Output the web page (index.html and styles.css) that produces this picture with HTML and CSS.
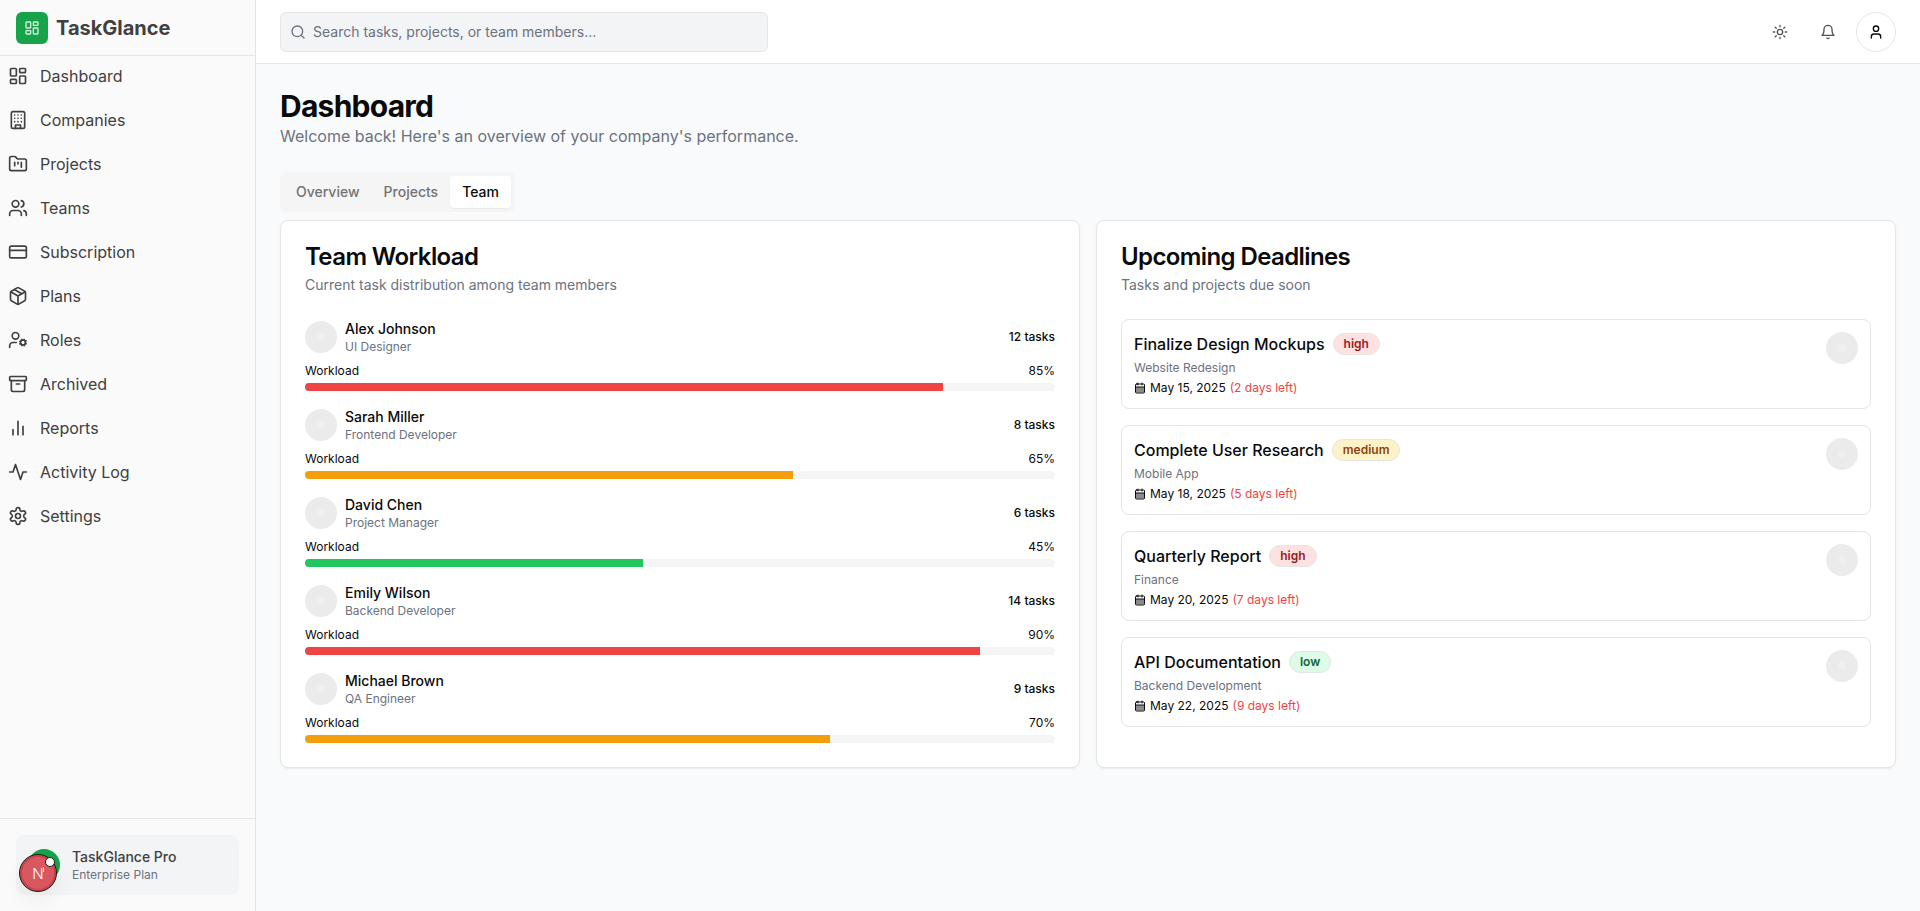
FILE: index.html
```html
<!DOCTYPE html>
<html lang="en">

<head>
    <meta charset="UTF-8">
    <meta name="viewport" content="width=device-width, initial-scale=1.0">
    <title>TaskGlance</title>
    <link rel="stylesheet" href="styles.css">
</head>

<body>
    <aside class="sidebar">
        <div class="brand">
            <div class="brand-logo">
                <svg class="icon" viewBox="0 0 24 24"><rect x="3" y="3" width="7" height="9" rx="1"/><rect x="14" y="3" width="7" height="5" rx="1"/><rect x="14" y="12" width="7" height="9" rx="1"/><rect x="3" y="16" width="7" height="5" rx="1"/></svg>
            </div>
            <span class="brand-name">TaskGlance</span>
        </div>
        <nav class="nav">
            <a class="nav-item"><svg class="icon" viewBox="0 0 24 24"><rect x="3" y="3" width="7" height="9" rx="1"/><rect x="14" y="3" width="7" height="5" rx="1"/><rect x="14" y="12" width="7" height="9" rx="1"/><rect x="3" y="16" width="7" height="5" rx="1"/></svg>Dashboard</a>
            <a class="nav-item"><svg class="icon" viewBox="0 0 24 24"><rect x="4" y="2" width="16" height="20" rx="2"/><path d="M9 22v-4h6v4M8 6h.01M16 6h.01M12 6h.01M12 10h.01M12 14h.01M16 10h.01M16 14h.01M8 10h.01M8 14h.01"/></svg>Companies</a>
            <a class="nav-item"><svg class="icon" viewBox="0 0 24 24"><path d="M4 20h16a2 2 0 0 0 2-2V8a2 2 0 0 0-2-2h-7.93a2 2 0 0 1-1.66-.9l-.82-1.2A2 2 0 0 0 7.93 3H4a2 2 0 0 0-2 2v13c0 1.1.9 2 2 2Z"/><path d="M8 10v4M12 10v2M16 10v6"/></svg>Projects</a>
            <a class="nav-item"><svg class="icon" viewBox="0 0 24 24"><path d="M16 21v-2a4 4 0 0 0-4-4H6a4 4 0 0 0-4 4v2"/><circle cx="9" cy="7" r="4"/><path d="M22 21v-2a4 4 0 0 0-3-3.87M16 3.13a4 4 0 0 1 0 7.75"/></svg>Teams</a>
            <a class="nav-item"><svg class="icon" viewBox="0 0 24 24"><rect x="2" y="5" width="20" height="14" rx="2"/><path d="M2 10h20"/></svg>Subscription</a>
            <a class="nav-item"><svg class="icon" viewBox="0 0 24 24"><path d="M16.5 9.4 7.55 4.24"/><path d="M21 16V8a2 2 0 0 0-1-1.73l-7-4a2 2 0 0 0-2 0l-7 4A2 2 0 0 0 3 8v8a2 2 0 0 0 1 1.73l7 4a2 2 0 0 0 2 0l7-4A2 2 0 0 0 21 16z"/><path d="M3.29 7 12 12l8.71-5M12 22V12"/></svg>Plans</a>
            <a class="nav-item"><svg class="icon" viewBox="0 0 24 24"><circle cx="18" cy="15" r="3"/><circle cx="9" cy="7" r="4"/><path d="M10 15H6a4 4 0 0 0-4 4v2"/><path d="m21.7 16.4-.9-.3m-5.6-2.2-.9-.3m2.3 5.1.3-.9m2.2-5.6.3-.9m.2 7.4-.4-1m-2.4-5.4-.4-1m-2.1 5.3 1-.4m5.4-2.8 1-.4"/></svg>Roles</a>
            <a class="nav-item"><svg class="icon" viewBox="0 0 24 24"><rect x="2" y="3" width="20" height="5" rx="1"/><path d="M4 8v11a2 2 0 0 0 2 2h12a2 2 0 0 0 2-2V8M10 12h4"/></svg>Archived</a>
            <a class="nav-item"><svg class="icon" viewBox="0 0 24 24"><path d="M18 20V10M12 20V4M6 20v-6"/></svg>Reports</a>
            <a class="nav-item"><svg class="icon" viewBox="0 0 24 24"><path d="M22 12h-4l-3 9L9 3l-3 9H2"/></svg>Activity Log</a>
            <a class="nav-item"><svg class="icon" viewBox="0 0 24 24"><path d="M12.22 2h-.44a2 2 0 0 0-2 2v.18a2 2 0 0 1-1 1.73l-.43.25a2 2 0 0 1-2 0l-.15-.08a2 2 0 0 0-2.73.73l-.22.38a2 2 0 0 0 .73 2.73l.15.1a2 2 0 0 1 1 1.72v.51a2 2 0 0 1-1 1.74l-.15.09a2 2 0 0 0-.73 2.73l.22.38a2 2 0 0 0 2.73.73l.15-.08a2 2 0 0 1 2 0l.43.25a2 2 0 0 1 1 1.73V20a2 2 0 0 0 2 2h.44a2 2 0 0 0 2-2v-.18a2 2 0 0 1 1-1.73l.43-.25a2 2 0 0 1 2 0l.15.08a2 2 0 0 0 2.73-.73l.22-.39a2 2 0 0 0-.73-2.73l-.15-.08a2 2 0 0 1-1-1.74v-.5a2 2 0 0 1 1-1.74l.15-.09a2 2 0 0 0 .73-2.73l-.22-.38a2 2 0 0 0-2.73-.73l-.15.08a2 2 0 0 1-2 0l-.43-.25a2 2 0 0 1-1-1.73V4a2 2 0 0 0-2-2z"/><circle cx="12" cy="12" r="3"/></svg>Settings</a>
        </nav>
        <div class="sidebar-footer">
            <div class="plan-card">
                <div class="plan-icon"></div>
                <div>
                    <div class="plan-name">TaskGlance Pro</div>
                    <div class="plan-type">Enterprise Plan</div>
                </div>
            </div>
        </div>
    </aside>

    <div class="page">
        <header class="topbar">
            <div class="search">
                <svg class="icon" viewBox="0 0 24 24"><circle cx="11" cy="11" r="8"/><path d="m21 21-4.3-4.3"/></svg>
                <input type="text" placeholder="Search tasks, projects, or team members...">
            </div>
            <div class="topbar-actions">
                <button class="icon-btn"><svg class="icon" viewBox="0 0 24 24"><circle cx="12" cy="12" r="4"/><path d="M12 2v2M12 20v2M4.93 4.93l1.41 1.41M17.66 17.66l1.41 1.41M2 12h2M20 12h2M6.34 17.66l-1.41 1.41M19.07 4.93l-1.41 1.41"/></svg></button>
                <button class="icon-btn"><svg class="icon" viewBox="0 0 24 24"><path d="M6 8a6 6 0 0 1 12 0c0 7 3 9 3 9H3s3-2 3-9"/><path d="M10.3 21a1.94 1.94 0 0 0 3.4 0"/></svg></button>
                <button class="icon-btn user-btn"><svg class="icon" viewBox="0 0 24 24"><path d="M19 21v-2a4 4 0 0 0-4-4H9a4 4 0 0 0-4 4v2"/><circle cx="12" cy="7" r="4"/></svg></button>
            </div>
        </header>

        <main class="content">
            <h1>Dashboard</h1>
            <p class="subtitle">Welcome back! Here's an overview of your company's performance.</p>

            <div class="tabs">
                <span class="tab">Overview</span>
                <span class="tab">Projects</span>
                <span class="tab active">Team</span>
            </div>

            <div class="columns">
                <section class="card">
                    <h3>Team Workload</h3>
                    <p class="card-desc">Current task distribution among team members</p>
                    <div class="members">
                        <div class="member">
                            <div class="member-top">
                                <div class="person">
                                    <div class="avatar"></div>
                                    <div>
                                        <div class="person-name">Alex Johnson</div>
                                        <div class="person-role">UI Designer</div>
                                    </div>
                                </div>
                                <span class="task-count">12 tasks</span>
                            </div>
                            <div class="load-label"><span>Workload</span><span>85%</span></div>
                            <div class="bar"><div class="bar-fill red" style="width: 85%"></div></div>
                        </div>
                        <div class="member">
                            <div class="member-top">
                                <div class="person">
                                    <div class="avatar"></div>
                                    <div>
                                        <div class="person-name">Sarah Miller</div>
                                        <div class="person-role">Frontend Developer</div>
                                    </div>
                                </div>
                                <span class="task-count">8 tasks</span>
                            </div>
                            <div class="load-label"><span>Workload</span><span>65%</span></div>
                            <div class="bar"><div class="bar-fill amber" style="width: 65%"></div></div>
                        </div>
                        <div class="member">
                            <div class="member-top">
                                <div class="person">
                                    <div class="avatar"></div>
                                    <div>
                                        <div class="person-name">David Chen</div>
                                        <div class="person-role">Project Manager</div>
                                    </div>
                                </div>
                                <span class="task-count">6 tasks</span>
                            </div>
                            <div class="load-label"><span>Workload</span><span>45%</span></div>
                            <div class="bar"><div class="bar-fill green" style="width: 45%"></div></div>
                        </div>
                        <div class="member">
                            <div class="member-top">
                                <div class="person">
                                    <div class="avatar"></div>
                                    <div>
                                        <div class="person-name">Emily Wilson</div>
                                        <div class="person-role">Backend Developer</div>
                                    </div>
                                </div>
                                <span class="task-count">14 tasks</span>
                            </div>
                            <div class="load-label"><span>Workload</span><span>90%</span></div>
                            <div class="bar"><div class="bar-fill red" style="width: 90%"></div></div>
                        </div>
                        <div class="member">
                            <div class="member-top">
                                <div class="person">
                                    <div class="avatar"></div>
                                    <div>
                                        <div class="person-name">Michael Brown</div>
                                        <div class="person-role">QA Engineer</div>
                                    </div>
                                </div>
                                <span class="task-count">9 tasks</span>
                            </div>
                            <div class="load-label"><span>Workload</span><span>70%</span></div>
                            <div class="bar"><div class="bar-fill amber" style="width: 70%"></div></div>
                        </div>
                    </div>
                </section>

                <section class="card">
                    <h3>Upcoming Deadlines</h3>
                    <p class="card-desc">Tasks and projects due soon</p>
                    <div class="deadlines">
                        <div class="deadline">
                            <div>
                                <div class="deadline-title">Finalize Design Mockups <span class="badge high">high</span></div>
                                <div class="deadline-project">Website Redesign</div>
                                <div class="deadline-date">
                                    <svg class="icon" viewBox="0 0 24 24"><rect class="cal-days" x="4" y="10" width="16" height="11"/><rect x="3" y="4" width="18" height="18" rx="2"/><path d="M16 2v4M8 2v4M3 10h18"/></svg>
                                    May 15, 2025 <span class="days-left">(2 days left)</span>
                                </div>
                            </div>
                            <div class="avatar"></div>
                        </div>
                        <div class="deadline">
                            <div>
                                <div class="deadline-title">Complete User Research <span class="badge medium">medium</span></div>
                                <div class="deadline-project">Mobile App</div>
                                <div class="deadline-date">
                                    <svg class="icon" viewBox="0 0 24 24"><rect class="cal-days" x="4" y="10" width="16" height="11"/><rect x="3" y="4" width="18" height="18" rx="2"/><path d="M16 2v4M8 2v4M3 10h18"/></svg>
                                    May 18, 2025 <span class="days-left">(5 days left)</span>
                                </div>
                            </div>
                            <div class="avatar"></div>
                        </div>
                        <div class="deadline">
                            <div>
                                <div class="deadline-title">Quarterly Report <span class="badge high">high</span></div>
                                <div class="deadline-project">Finance</div>
                                <div class="deadline-date">
                                    <svg class="icon" viewBox="0 0 24 24"><rect class="cal-days" x="4" y="10" width="16" height="11"/><rect x="3" y="4" width="18" height="18" rx="2"/><path d="M16 2v4M8 2v4M3 10h18"/></svg>
                                    May 20, 2025 <span class="days-left">(7 days left)</span>
                                </div>
                            </div>
                            <div class="avatar"></div>
                        </div>
                        <div class="deadline">
                            <div>
                                <div class="deadline-title">API Documentation <span class="badge low">low</span></div>
                                <div class="deadline-project">Backend Development</div>
                                <div class="deadline-date">
                                    <svg class="icon" viewBox="0 0 24 24"><rect class="cal-days" x="4" y="10" width="16" height="11"/><rect x="3" y="4" width="18" height="18" rx="2"/><path d="M16 2v4M8 2v4M3 10h18"/></svg>
                                    May 22, 2025 <span class="days-left">(9 days left)</span>
                                </div>
                            </div>
                            <div class="avatar"></div>
                        </div>
                    </div>
                </section>
            </div>
        </main>
    </div>

    <!-- dev tools badge sits over the sidebar footer -->
    <div class="dev-badge">
        <span class="dev-letter">N</span>
        <span class="dev-tick"></span>
        <span class="dev-dot"></span>
    </div>
</body>

</html>
```

FILE: styles.css
```css
* {
    box-sizing: border-box;
}

body {
    margin: 0;
    height: 911px;
    display: flex;
    overflow: hidden;
    font-family: Inter, "Liberation Sans", sans-serif;
    color: #0a0a0a;
    background-color: #f9fafb;
}

.icon {
    width: 16px;
    height: 16px;
    flex-shrink: 0;
    fill: none;
    stroke: currentColor;
    stroke-width: 2;
    stroke-linecap: round;
    stroke-linejoin: round;
}

/* sidebar */
.sidebar {
    width: 256px;
    flex-shrink: 0;
    display: flex;
    flex-direction: column;
    background-color: #fafafa;
    border-right: 1px solid #e5e5e5;
}

.brand {
    height: 56px;
    display: flex;
    align-items: center;
    gap: 8px;
    padding-left: 16px;
    border-bottom: 1px solid #e5e5e5;
}

.brand-logo {
    width: 32px;
    height: 32px;
    display: flex;
    align-items: center;
    justify-content: center;
    border-radius: 6px;
    color: #d1f0dc;
    background-color: #16a34a;
}

.brand-name {
    font-size: 20px;
    font-weight: 700;
    color: #404040;
}

.nav {
    flex: 1;
    display: flex;
    flex-direction: column;
    gap: 4px;
}

.nav-item {
    height: 40px;
    display: flex;
    align-items: center;
    gap: 12px;
    padding-left: 8px;
    font-size: 16px;
    color: #404040;
}

.nav-item .icon {
    width: 20px;
    height: 20px;
}

.sidebar-footer {
    padding: 16px;
    border-top: 1px solid #e5e5e5;
}

.plan-card {
    height: 60px;
    display: flex;
    align-items: center;
    gap: 12px;
    padding: 12px;
    border-radius: 8px;
    background-color: #f3f4f6;
}

.plan-icon {
    width: 32px;
    height: 32px;
    border-radius: 50%;
    background-color: #16a34a;
}

.plan-name {
    font-size: 14px;
    line-height: 20px;
    font-weight: 450;
    color: #404040;
}

.plan-type {
    font-size: 12px;
    line-height: 16px;
    color: #6b7280;
}

.dev-badge {
    position: absolute;
    left: 19px;
    top: 854px;
    width: 38px;
    height: 38px;
    display: flex;
    align-items: center;
    justify-content: center;
    border-radius: 50%;
    border: 1px solid #1a1a1a;
    background-color: #d9585f;
    box-shadow: inset 0 0 0 2px #c8434b, 0 8px 20px rgba(0, 0, 0, 0.06);
}

.dev-letter {
    font-size: 15px;
    font-weight: 300;
    color: #fff;
}

.dev-tick {
    position: absolute;
    left: 23px;
    top: 12px;
    width: 1px;
    height: 5px;
    background-color: #fff;
}

.dev-dot {
    position: absolute;
    right: 1px;
    top: 2px;
    width: 10px;
    height: 10px;
    border-radius: 50%;
    border: 1px solid #1a1a1a;
    background-color: #fff;
}

/* top bar */
.page {
    flex: 1;
    min-width: 0;
}

.topbar {
    height: 64px;
    display: flex;
    align-items: center;
    justify-content: space-between;
    padding: 0 24px;
    background-color: #fff;
    border-bottom: 1px solid #e5e5e5;
}

.search {
    width: 488px;
    height: 40px;
    display: flex;
    align-items: center;
    gap: 7px;
    padding-left: 9px;
    color: #6b7280;
    background-color: #f3f4f6;
    border: 1px solid #e5e5e5;
    border-radius: 6px;
}

.search input {
    flex: 1;
    border: 0;
    padding: 0;
    outline: 0;
    font: 14px Inter, "Liberation Sans", sans-serif;
    background: transparent;
}

.search input::placeholder {
    color: #6b7280;
    opacity: 1;
}

.topbar-actions {
    display: flex;
    gap: 8px;
}

.icon-btn {
    width: 40px;
    height: 40px;
    display: flex;
    align-items: center;
    justify-content: center;
    padding: 0;
    color: #525252;
    background: none;
    border: 0;
    border-radius: 50%;
}

.user-btn {
    color: #0a0a0a;
    background-color: #fff;
    border: 1px solid #e5e5e5;
}

/* main content */
.content {
    padding: 24px;
}

h1 {
    margin: 0;
    font-size: 30px;
    line-height: 36px;
    font-weight: 700;
    letter-spacing: -0.025em;
}

.subtitle {
    margin: 0 0 24px;
    font-size: 16px;
    line-height: 24px;
    color: #6b7280;
}

.tabs {
    width: fit-content;
    height: 40px;
    display: flex;
    padding: 4px;
    margin-bottom: 8px;
    border-radius: 6px;
    background-color: #f5f5f5;
}

.tab {
    padding: 6px 12px;
    font-size: 14px;
    line-height: 20px;
    font-weight: 450;
    color: #737373;
    border-radius: 4px;
}

.tab.active {
    color: #0a0a0a;
    background-color: #fff;
    box-shadow: 0 1px 2px rgba(0, 0, 0, 0.05);
}

.columns {
    display: grid;
    grid-template-columns: 1fr 1fr;
    gap: 16px;
}

.card {
    padding: 24px;
    background-color: #fff;
    border: 1px solid #e5e5e5;
    border-radius: 8px;
    box-shadow: 0 1px 2px rgba(0, 0, 0, 0.05);
}

h3 {
    margin: 0 0 6px;
    font-size: 24px;
    line-height: 24px;
    font-weight: 600;
    letter-spacing: -0.025em;
}

.card-desc {
    margin: 0 0 24px;
    font-size: 14px;
    line-height: 20px;
    color: #6b7280;
}

.avatar {
    width: 32px;
    height: 32px;
    flex-shrink: 0;
    border-radius: 50%;
    background: radial-gradient(circle, #f0f0f0 0, #f0f0f0 2px, #ebebeb 5px);
}

/* team workload */
.members {
    display: flex;
    flex-direction: column;
    gap: 16px;
}

.member-top {
    display: flex;
    align-items: center;
    justify-content: space-between;
    margin-bottom: 8px;
}

.person {
    display: flex;
    align-items: center;
    gap: 8px;
}

.person-name {
    font-size: 14px;
    line-height: 20px;
    font-weight: 450;
}

.person-role {
    font-size: 12px;
    line-height: 16px;
    color: #6b7280;
}

.task-count {
    font-size: 12px;
    line-height: 16px;
    font-weight: 450;
}

.load-label {
    display: flex;
    justify-content: space-between;
    margin-bottom: 4px;
    font-size: 12px;
    line-height: 16px;
}

.bar {
    height: 8px;
    overflow: hidden;
    border-radius: 4px;
    background-color: #f5f5f5;
}

.bar-fill {
    height: 100%;
}

.red {
    background-color: #ef4444;
}

.amber {
    background-color: #f59e0b;
}

.green {
    background-color: #22c55e;
}

/* deadlines */
.deadlines {
    display: flex;
    flex-direction: column;
    gap: 16px;
}

.deadline {
    display: flex;
    justify-content: space-between;
    padding: 12px;
    border: 1px solid #e5e5e5;
    border-radius: 8px;
}

.deadline-title {
    display: flex;
    align-items: center;
    gap: 8px;
    font-size: 16px;
    line-height: 24px;
    font-weight: 450;
}

.badge {
    padding: 2px 10px;
    font-size: 12px;
    line-height: 16px;
    font-weight: 600;
    border: 1px solid #e5e5e5;
    border-radius: 999px;
}

.high {
    color: #991b1b;
    background-color: #fee2e2;
}

.medium {
    color: #92400e;
    background-color: #fef3c7;
}

.low {
    color: #166534;
    background-color: #dcfce7;
}

.deadline-project {
    margin-top: 4px;
    font-size: 12px;
    line-height: 16px;
    color: #6b7280;
}

.deadline-date {
    display: flex;
    align-items: center;
    gap: 4px;
    margin-top: 4px;
    font-size: 12px;
    line-height: 16px;
}

.deadline-date .icon {
    width: 12px;
    height: 12px;
}

.cal-days {
    fill: #8a8a8a;
    stroke: none;
}

.days-left {
    color: #ef4444;
}
```
